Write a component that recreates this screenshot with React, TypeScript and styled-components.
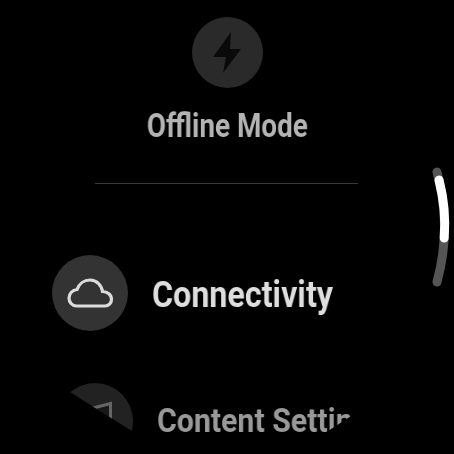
import styled, { createGlobalStyle } from "styled-components";

const GlobalStyle = createGlobalStyle`
  html, body {
    margin: 0;
    padding: 0;
    background: #000;
  }
`;

const Screen = styled.div`
  position: relative;
  width: 454px;
  height: 454px;
  overflow: hidden;
  background: #000;
  font-family: Roboto, "Liberation Sans", sans-serif;
  font-weight: 700;
  clip-path: polygon(0 0, 454px 0, 454px 349px, 325px 433px, 135px 433px, 0 348px);
`;

const List = styled.div`
  display: flex;
  flex-direction: column;
  padding-top: 17px;
`;

const TopItem = styled.div`
  display: flex;
  flex-direction: column;
  align-items: center;
  gap: 18px;
`;

const Circle = styled.div<{ $size: number; $bg: string }>`
  display: flex;
  align-items: center;
  justify-content: center;
  flex: none;
  width: ${(p) => p.$size}px;
  height: ${(p) => p.$size}px;
  border-radius: 50%;
  background: ${(p) => p.$bg};
`;

const Label = styled.div<{ $size: number; $color: string; $squeeze: number; $nudge?: number }>`
  font-size: ${(p) => p.$size}px;
  line-height: 40px;
  color: ${(p) => p.$color};
  white-space: nowrap;
  margin-top: ${(p) => p.$nudge ?? 0}px;
  transform: scaleX(${(p) => p.$squeeze});
  transform-origin: left center;
  will-change: transform;
`;

const TopLabel = styled(Label)`
  transform-origin: center;
`;

const Divider = styled.div`
  width: 263px;
  height: 1px;
  margin: 37px 0 0 95px;
  background: #3a3a3a;
`;

const Row = styled.div<{ $left: number; $gap: number; $top: number }>`
  display: flex;
  align-items: center;
  gap: ${(p) => p.$gap}px;
  margin-top: ${(p) => p.$top}px;
  padding-left: ${(p) => p.$left}px;
`;

const Scrollbar = styled.svg`
  position: absolute;
  top: 160px;
  right: 0;
`;

export default function App() {
  return (
    <Screen>
      <GlobalStyle />
      <List>
        <TopItem>
          <Circle $size={71} $bg="#2a2a2a">
            <svg width="28" height="41" viewBox="0 0 28 41">
              <path d="M18 0 L0 25 H13 L10 41 L28 17 H17 Z" fill="#0a0a0a" />
            </svg>
          </Circle>
          <TopLabel $size={33} $color="#b4b4b4" $squeeze={0.845}>Offline Mode</TopLabel>
        </TopItem>
        <Divider />
        <Row $left={52} $gap={24} $top={71}>
          <Circle $size={76} $bg="#333333">
            <svg width="48" height="32" viewBox="0 0 48 32">
              <path
                d="M10.5 29 C6 29 3 25 3 21 C3 16.5 6.5 13 11 12.5 C13 7 18 3 24 3 C30.5 3 35.5 8 36.5 14.5 C41.5 14.5 45.5 18 45.5 22.5 C45.5 26 42.5 29 39 29 Z"
                fill="none"
                stroke="#dcdcdc"
                strokeWidth="3.2"
              />
            </svg>
          </Circle>
          <Label $size={36} $color="#dedede" $squeeze={0.895} $nudge={4}>Connectivity</Label>
        </Row>
        <Row $left={57} $gap={24} $top={52}>
          <Circle $size={76} $bg="#222222">
            <svg width="40" height="40" viewBox="0 0 40 40">
              <path d="M18.5 7 L35.5 2.5 V26 Z" fill="#181818" stroke="#666666" strokeWidth="3" />
            </svg>
          </Circle>
          <Label $size={34} $color="#999999" $squeeze={0.89} $nudge={-2}>Content Settings</Label>
        </Row>
      </List>
      <Scrollbar width="30" height="140" viewBox="0 0 30 140">
        <path d="M13 12 Q28 67 13 122" fill="none" stroke="#555555" strokeWidth="9" strokeLinecap="round" />
        <path d="M15 20 Q22.5 49 20.2 78" fill="none" stroke="#ffffff" strokeWidth="9" strokeLinecap="round" />
      </Scrollbar>
    </Screen>
  );
}
